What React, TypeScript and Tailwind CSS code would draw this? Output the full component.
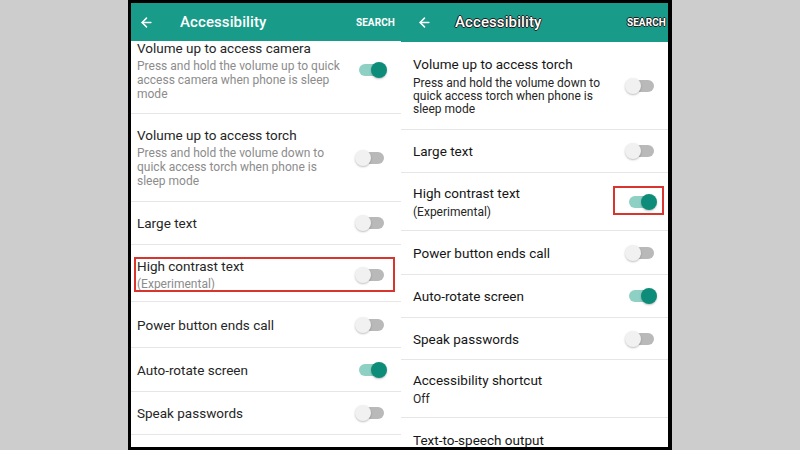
import { ArrowLeft } from "lucide-react";

type Row = {
  title: string;
  lines?: string[];
  toggle?: "on" | "off";
  height: string;
  boxed?: boolean;
  first?: boolean;
  nudge?: string;
};

const leftRows: Row[] = [
  {
    title: "Volume up to access camera",
    lines: [
      "Press and hold the volume up to quick",
      "access camera when phone is sleep",
      "mode",
    ],
    toggle: "on",
    height: "h-[73px]",
    first: true,
  },
  {
    title: "Volume up to access torch",
    lines: [
      "Press and hold the volume down to",
      "quick access torch when phone is",
      "sleep mode",
    ],
    toggle: "off",
    height: "h-[88px]",
  },
  { title: "Large text", toggle: "off", height: "h-[43px]" },
  {
    title: "High contrast text",
    lines: ["(Experimental)"],
    toggle: "off",
    height: "h-[57px]",
    boxed: true,
    nudge: "pt-[3px]",
  },
  { title: "Power button ends call", toggle: "off", height: "h-[46px]" },
  { title: "Auto-rotate screen", toggle: "on", height: "h-[44px]" },
  { title: "Speak passwords", toggle: "off", height: "h-[43px]" },
  { title: "", height: "h-[40px]" },
];

const rightRows: Row[] = [
  {
    title: "Volume up to access torch",
    lines: [
      "Press and hold the volume down to",
      "quick access torch when phone is",
      "sleep mode",
    ],
    toggle: "off",
    height: "h-[88px]",
  },
  { title: "Large text", toggle: "off", height: "h-[43px]" },
  {
    title: "High contrast text",
    lines: ["(Experimental)"],
    toggle: "on",
    height: "h-[58px]",
    boxed: true,
  },
  { title: "Power button ends call", toggle: "off", height: "h-[44px]" },
  { title: "Auto-rotate screen", toggle: "on", height: "h-[43px]" },
  { title: "Speak passwords", toggle: "off", height: "h-[42px]" },
  {
    title: "Accessibility shortcut",
    lines: ["Off"],
    height: "h-[58px]",
  },
  { title: "Text-to-speech output", height: "h-[40px]", nudge: "pt-[4px]" },
];

const Toggle = ({ on }: { on: boolean }) => (
  <div className="relative w-[32px] h-[18px] flex items-center shrink-0">
    <div
      className={`ml-[4px] w-[25px] h-[12px] rounded-full ${on ? "bg-[#8fd0c5]" : "bg-[#b9b9b9]"}`}
    />
    <div
      className={`absolute top-[1px] w-[16px] h-[16px] rounded-full shadow-[0_1px_2px_rgba(0,0,0,0.25)] ${on ? "right-0 bg-[#0e8c7a]" : "left-0 bg-[#f1f1f1]"}`}
    />
  </div>
);

const Screen = ({
  rows,
  contrast,
  width,
  header,
}: {
  rows: Row[];
  contrast: boolean;
  width: string;
  header: { height: string; arrowPad: string; titlePad: string; searchPad: string };
}) => {
  const outline = contrast
    ? "[text-shadow:-1px_0_#1d1d1d,1px_0_#1d1d1d,0_-1px_#1d1d1d,0_1px_#1d1d1d]"
    : "";
  return (
    <div className={`${width} h-full bg-white flex flex-col overflow-hidden`}>
      <div
        className={`${header.height} shrink-0 bg-[#189b89] flex items-center text-white ${header.arrowPad} ${header.searchPad}`}
      >
        <ArrowLeft size={15} strokeWidth={2.4} className="shrink-0" />
        <span
          className={`${header.titlePad} text-[15px] font-medium tracking-[0.1px] ${outline}`}
        >
          Accessibility
        </span>
        <span
          className={`ml-auto text-[10px] font-bold tracking-[0.1px] ${outline}`}
        >
          SEARCH
        </span>
      </div>
      <div className="flex flex-col">
        {rows.map((row, i) => (
          <div
            key={i}
            className={`relative ${row.height} ${row.nudge ?? ""} shrink-0 flex ${row.first ? "items-start" : "items-center"} justify-between border-b border-[#e6e6e6] ${contrast ? "pl-[12px] pr-[11px]" : "pl-[6px] pr-[14px]"}`}
          >
            <div className={`flex flex-col ${row.first ? "-mt-[1px]" : ""}`}>
              <div
                className={`text-[13.5px] leading-[16px] ${contrast ? "text-[#161616]" : "text-[#262626]"}`}
              >
                {row.title}
              </div>
              {row.lines && (
                <div
                  className={`text-[12px] ${contrast ? "mt-[5px] leading-[13px] text-[#262626]" : "mt-[3px] leading-[14px] text-[#8c8c8c]"}`}
                >
                  {row.lines.map((l) => (
                    <div key={l}>{l}</div>
                  ))}
                </div>
              )}
            </div>
            {row.toggle && (
              <div className={row.first ? "mt-[20px]" : ""}>
                <Toggle on={row.toggle === "on"} />
              </div>
            )}
            {row.boxed && !contrast && (
              <div className="absolute left-[3px] right-[6px] top-[12px] bottom-[9px] border-2 border-[#d9352f]" />
            )}
            {row.boxed && contrast && (
              <div className="absolute right-[4px] top-[13px] w-[51px] h-[29px] border-2 border-[#d9352f]" />
            )}
          </div>
        ))}
      </div>
    </div>
  );
};

export default function App() {
  return (
    <div
      className="w-[800px] h-[450px] bg-[#cdcdcd] flex overflow-hidden"
      style={{ fontFamily: "Roboto, 'Noto Sans', sans-serif" }}
    >
      <div className="w-[128px] shrink-0" />
      <div className="w-[544px] h-[450px] shrink-0 border-black border-t-[3px] border-b-[3px] border-l-[3px] border-r-[4px] flex bg-white">
        <Screen
          rows={leftRows}
          contrast={false}
          width="w-[270px]"
          header={{ height: "h-[38px]", arrowPad: "pl-[8px]", titlePad: "ml-[26px]", searchPad: "pr-[6px]" }}
        />
        <Screen
          rows={rightRows}
          contrast={true}
          width="w-[267px]"
          header={{ height: "h-[39px]", arrowPad: "pl-[16px]", titlePad: "ml-[23px]", searchPad: "pr-[2px]" }}
        />
      </div>
    </div>
  );
}
